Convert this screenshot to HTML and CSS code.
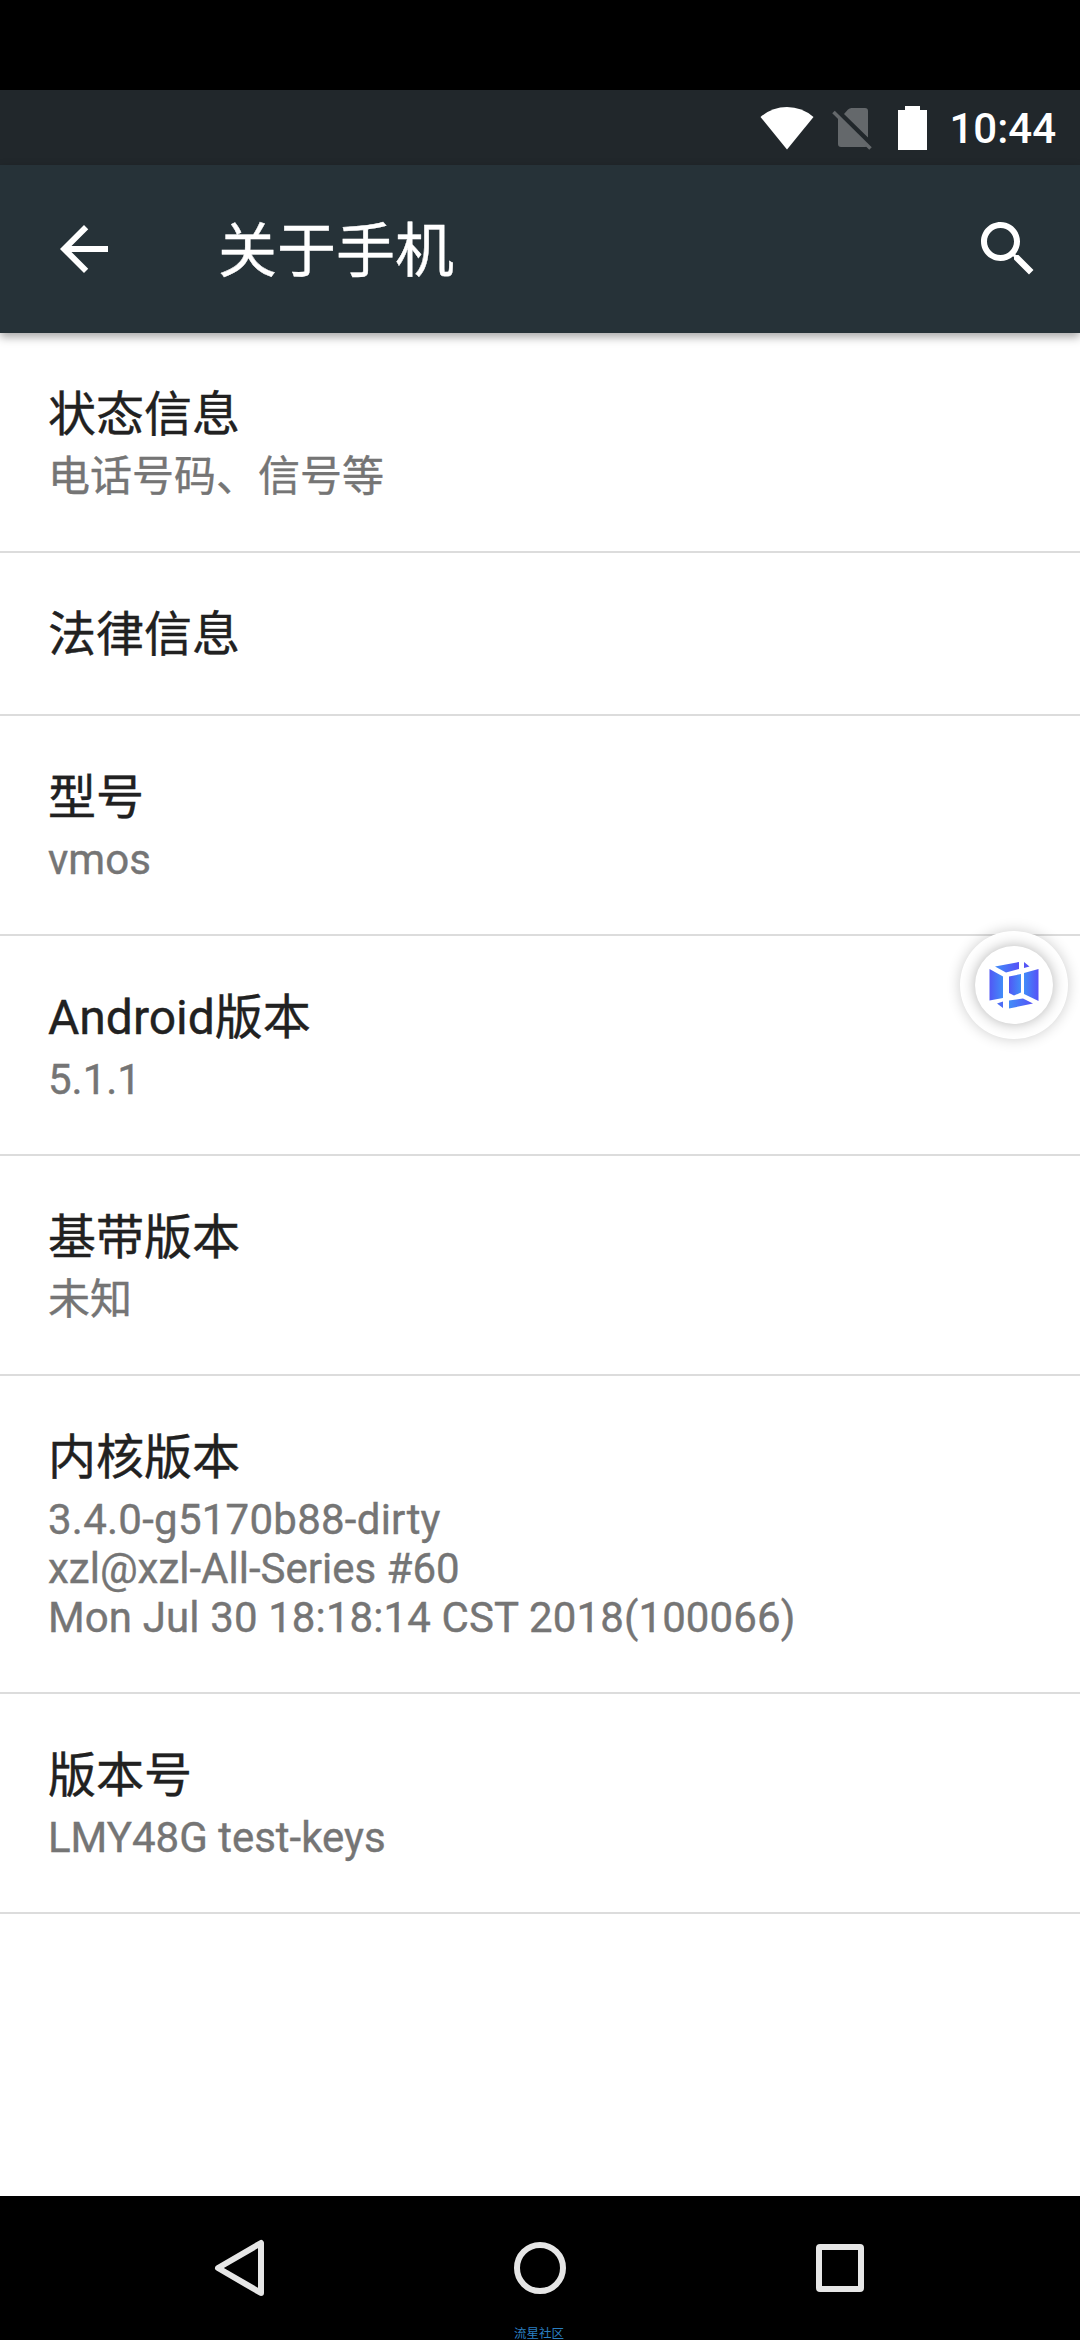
FILE: index.html
```html
<!DOCTYPE html>
<html lang="zh-CN">
<head>
    <meta charset="UTF-8">
    <meta name="viewport" content="width=device-width, initial-scale=1.0">
    <title>关于手机</title>
    <link rel="stylesheet" href="styles.css">
</head>
<body>
    <div class="screen">
        <div class="status-bar">
            <svg class="wifi" width="54" height="44" viewBox="0 0 54 44">
                <path d="M0.500 11 Q12 1 27 1 T53.500 11 L27 43.500 Z" fill="#fff"/>
            </svg>
            <svg class="no-sim" width="40" height="42" viewBox="0 0 40 42">
                <path d="M12 6 L16 1.500 Q17.500 0 19.500 0 H33 Q36 0 36 3 V29.500 Z M6 7.500 L36 37.500 Q35 39 33 39 H9 Q6 39 6 36 Z" fill="#64686b"/>
                <path d="M1.500 4 L38.500 40.500" stroke="#64686b" stroke-width="3.500"/>
            </svg>
            <svg class="battery" width="29" height="44" viewBox="0 0 29 44">
                <path d="M7 0 H22 V4 H29 V44 H0 V4 H7 Z" fill="#fff"/>
            </svg>
            <span class="clock">10:44</span>
        </div>

        <header class="toolbar">
            <svg class="back" width="72" height="72" viewBox="0 0 24 24">
                <path d="M20 11H7.830l5.590-5.590L12 4l-8 8 8 8 1.410-1.410L7.830 13H20v-2z" fill="#fff"/>
            </svg>
            <h1>关于手机</h1>
            <svg class="search" width="72" height="72" viewBox="0 0 24 24">
                <path d="M15.500 14h-.79l-.28-.27C15.410 12.590 16 11.110 16 9.500 16 5.910 13.090 3 9.500 3S3 5.910 3 9.500 5.910 16 9.500 16c1.610 0 3.090-.59 4.230-1.570l.27.28v.79l5 4.990L20.490 19l-4.990-5zm-6 0C7.010 14 5 11.990 5 9.500S7.010 5 9.500 5 14 7.010 14 9.500 11.990 14 9.500 14z" fill="#fff"/>
            </svg>
        </header>

        <main class="list">
            <div class="item">
                <h2>状态信息</h2>
                <p>电话号码、信号等</p>
            </div>
            <div class="item">
                <h2>法律信息</h2>
            </div>
            <div class="item">
                <h2>型号</h2>
                <p>vmos</p>
            </div>
            <div class="item">
                <h2>Android版本</h2>
                <p>5.1.1</p>
            </div>
            <div class="item">
                <h2>基带版本</h2>
                <p>未知</p>
            </div>
            <div class="item">
                <h2>内核版本</h2>
                <p><span class="kernel">3.4.0-g5170b88-dirty</span><br>xzl@xzl-All-Series #60<br><span class="build-date">Mon Jul 30 18:18:14 CST 2018(100066)</span></p>
            </div>
            <div class="item">
                <h2>版本号</h2>
                <p>LMY48G test-keys</p>
            </div>
        </main>

        <nav class="nav-bar">
            <svg width="60" height="60" viewBox="0 0 60 60">
                <path d="M51 5 V55 L8 30 Z"/>
            </svg>
            <svg width="60" height="60" viewBox="0 0 60 60">
                <circle cx="30" cy="30" r="23"/>
            </svg>
            <svg width="60" height="60" viewBox="0 0 60 60">
                <rect x="9" y="9" width="42" height="42" rx="1"/>
            </svg>
            <span class="watermark">流星社区</span>
        </nav>

        <!-- 悬浮球 -->
        <div class="float-ball">
            <div class="float-inner">
                <svg width="50" height="48" viewBox="0 0 50 48">
                    <defs>
                        <linearGradient id="left" x1="0" x2="1">
                            <stop offset="0" stop-color="#5157f5"/>
                            <stop offset="1" stop-color="#418df8"/>
                        </linearGradient>
                        <linearGradient id="right" x1="0" x2="1">
                            <stop offset="0" stop-color="#418df8"/>
                            <stop offset="1" stop-color="#5651f7"/>
                        </linearGradient>
                    </defs>
                    <path d="M0.500 8 L14 15.500 V37 L0.500 39.500 Z" fill="url(#left)"/>
                    <path d="M6 5.500 L30 1 V8 L17 11.500 Z" fill="url(#right)"/>
                    <path d="M35 1 L40.500 5.500 L35 7 Z" fill="#5455f5"/>
                    <path d="M35 12 L49.500 8 V40 L35 33 Z" fill="url(#right)"/>
                    <path d="M20 15.500 L32 13 V31.500 L25 34.500 L20 32 Z" fill="url(#left)"/>
                    <path d="M8 42.500 L14 40.500 V47 Z" fill="#4c6df6"/>
                    <path d="M20 39.500 L34 37.500 L44 42.500 L20 47.500 Z" fill="url(#right)"/>
                </svg>
            </div>
        </div>
    </div>
</body>
</html>
```
FILE: styles.css
```css
body {
    margin: 0;
    background-color: #000;
    font-family: Roboto, "Noto Sans CJK SC", sans-serif;
}

h1, h2, p {
    margin: 0;
    font-weight: 400;
    -webkit-text-stroke: 0.4px currentColor;
}

svg {
    display: block;
    flex-shrink: 0;
}

.screen {
    position: relative;
    display: flex;
    flex-direction: column;
    box-sizing: border-box;
    width: 1080px;
    height: 2340px;
    padding-top: 90px;
    overflow: hidden;
}

.status-bar {
    display: flex;
    align-items: center;
    justify-content: flex-end;
    height: 75px;
    padding-right: 24px;
    background-color: #21272b;
}

.no-sim {
    margin-top: 3px;
    margin-left: 18px;
}

.battery {
    margin-left: 26px;
}

.clock {
    margin-top: 3px;
    margin-left: 22px;
    color: #fff;
    font-size: 42px;
    font-weight: 500;
    line-height: 72px;
}

.toolbar {
    position: relative;
    display: flex;
    align-items: center;
    height: 168px;
    padding: 0 36px 0 48px;
    background-color: #263238;
    box-shadow: 0 4px 9px rgba(0, 0, 0, 0.35);
}

.toolbar h1 {
    flex: 1;
    margin-left: 98px;
    padding-top: 5px;
    color: #fff;
    font-size: 59px;
    line-height: 84px;
}

.list {
    flex: 1;
    background-color: #fff;
}

.item {
    padding: 52px 48px 50px;
    border-bottom: 2px solid #dcdcdc;
}

.item h2 {
    color: #212121;
    font-size: 48px;
    line-height: 59px;
}

.item p {
    margin-top: 8px;
    color: #757575;
    font-size: 42px;
    line-height: 49px;
}

.kernel {
    letter-spacing: 0.25px;
}

.build-date {
    letter-spacing: 0.12px;
}

.nav-bar {
    position: relative;
    display: flex;
    justify-content: center;
    gap: 240px;
    height: 102px;
    padding-top: 42px;
    background-color: #000;
}

.nav-bar svg {
    fill: none;
    stroke: #e6e6e6;
    stroke-width: 6px;
    stroke-linejoin: round;
}

.watermark {
    position: absolute;
    left: 514px;
    bottom: 0;
    color: #2b7fc0;
    font-size: 12.500px;
    line-height: 13px;
}

.float-ball {
    position: absolute;
    top: 931px;
    left: 960px;
    display: flex;
    align-items: center;
    justify-content: center;
    width: 108px;
    height: 108px;
    border-radius: 50%;
    background-color: #fff;
    box-shadow: 0 0 14px rgba(0, 0, 0, 0.2);
}

.float-inner {
    display: flex;
    align-items: center;
    justify-content: center;
    width: 78px;
    height: 78px;
    border-radius: 50%;
    background-color: #fff;
    box-shadow: 0 0 14px rgba(0, 0, 0, 0.3);
}
```
